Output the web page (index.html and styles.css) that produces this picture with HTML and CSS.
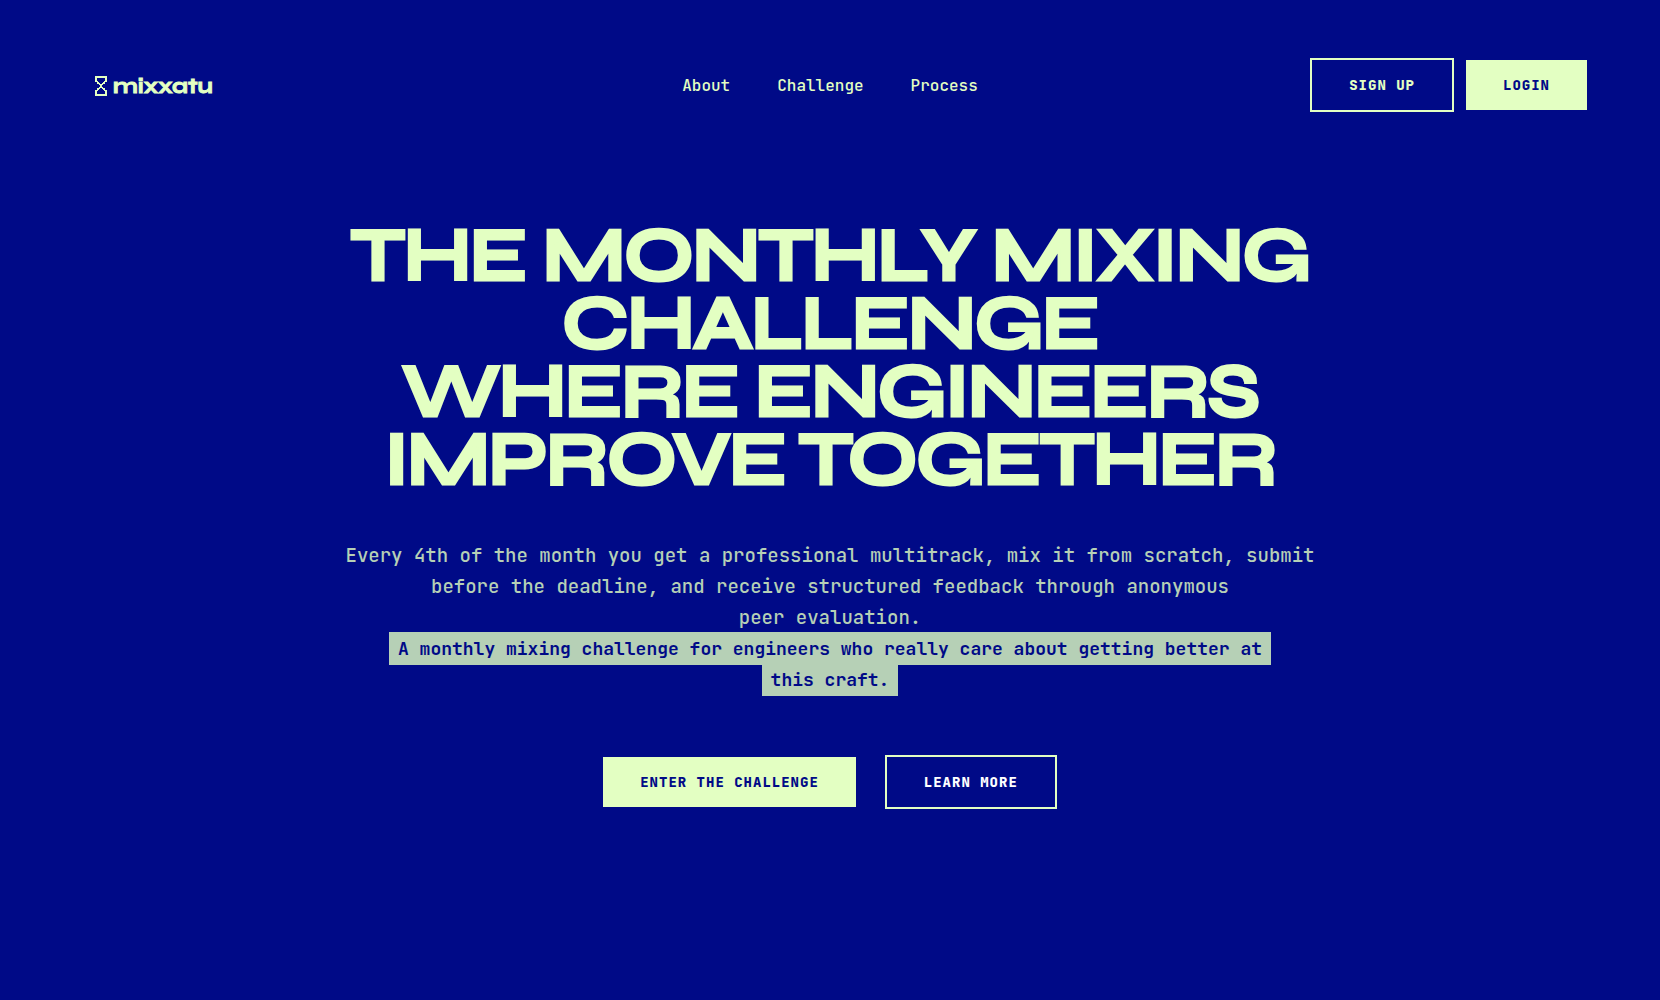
FILE: index.html
```html
<!DOCTYPE html>
<html lang="en">
<head>
<meta charset="utf-8">
<meta name="viewport" content="width=device-width, initial-scale=1">
<title>mixxatu</title>
<link rel="stylesheet" href="styles.css">
</head>
<body>
<header class="header">
  <a class="logo" href="#">
    <svg class="logo-icon" width="12" height="20" viewBox="0 0 12 20" fill="currentColor" aria-hidden="true">
      <path d="M0 0H12V6H10V8H8V9H7V11H8V12H10V14H12V20H0V14H2V12H4V11H5V9H4V8H2V6H0ZM2 2V5H3V6H4V7H5V8H7V7H8V6H9V5H10V2ZM5 12V13H4V14H3V15H2V18H10V15H9V14H8V13H7V12Z" fill-rule="evenodd"/>
    </svg>
    <span>mixxatu</span>
  </a>
  <nav class="nav">
    <a href="#about">About</a>
    <a href="#challenge">Challenge</a>
    <a href="#process">Process</a>
  </nav>
  <div class="account">
    <button class="button button-outline" type="button">SIGN UP</button>
    <button class="button button-solid" type="button">LOGIN</button>
  </div>
</header>
<main class="hero">
  <h1 class="title">THE MONTHLY MIXING<br>CHALLENGE<br>WHERE ENGINEERS<br>IMPROVE TOGETHER</h1>
  <p class="intro">Every 4th of the month you get a professional multitrack, mix it from scratch, submit<br>before the deadline, and receive structured feedback through anonymous<br>peer evaluation.<br><strong class="highlight">A monthly mixing challenge for engineers who really care about getting better at<br>this craft.</strong></p>
  <div class="actions">
    <button class="button button-solid" type="button">ENTER THE CHALLENGE</button>
    <button class="button button-outline button-light" type="button">LEARN MORE</button>
  </div>
</main>
</body>
</html>
```
FILE: styles.css
```css
:root {
  --navy: #000a87;
  --lime: #e3ffc2;
  --sage: #b6d0b6;
  --mono: "JetBrains Mono", "DejaVu Sans Mono", monospace;
  --display: "Syne", "DejaVu Sans", sans-serif;
}

* {
  box-sizing: border-box;
}

body {
  margin: 0;
  min-height: 100vh;
  background: var(--navy);
  color: var(--lime);
  font-family: var(--mono);
}

.header {
  display: grid;
  grid-template-columns: 1fr auto 1fr;
  align-items: center;
  padding: 58px 73px 0;
}

.logo {
  display: flex;
  align-items: center;
  gap: 6px;
  padding: 2px 0 0 22px;
  color: inherit;
  font: 700 22px/26px var(--display);
  -webkit-text-stroke: 1px currentColor;
  text-decoration: none;
}

.nav {
  display: flex;
  gap: 47px;
  padding-top: 1px;
}

.nav a {
  color: inherit;
  font-size: 16px;
  font-weight: 500;
  line-height: 24px;
  text-decoration: none;
}

.account {
  display: flex;
  align-items: center;
  justify-content: flex-end;
  gap: 12px;
}

.button {
  padding: 16px 37px;
  border: 0;
  border-radius: 0;
  font: 800 14px/18px var(--mono);
  letter-spacing: 1px;
  cursor: pointer;
}

.button-solid {
  background: var(--lime);
  color: var(--navy);
}

.button-outline {
  border: 2px solid var(--lime);
  background: transparent;
  color: var(--lime);
}

.button-light {
  color: #fff;
}

.hero {
  display: flex;
  flex-direction: column;
  align-items: center;
  padding: 110px 24px 64px;
  text-align: center;
}

.title {
  margin: 0;
  font: 700 76px/68px var(--display);
  letter-spacing: -2px;
  -webkit-text-stroke: 3px currentColor;
}

.intro {
  margin: 46px 0 0;
  color: var(--sage);
  font-size: 19px;
  font-weight: 500;
  line-height: 31px;
}

.highlight {
  padding: 5px 9px;
  background: var(--sage);
  color: var(--navy);
  font-size: 18px;
  -webkit-box-decoration-break: clone;
  box-decoration-break: clone;
}

.actions {
  display: flex;
  align-items: center;
  gap: 29px;
  margin-top: 60px;
}
```
